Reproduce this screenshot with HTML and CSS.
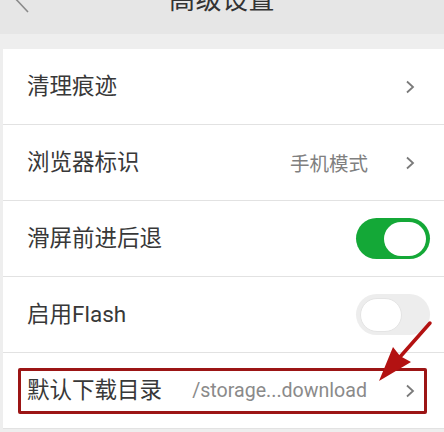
FILE: index.html
```html
<!DOCTYPE html>
<html lang="zh-CN">
<head>
<meta charset="utf-8">
<link rel="stylesheet" href="styles.css">
</head>
<body>
<div class="screen">
  <header class="topbar">
    <svg class="back" width="20" height="16" viewBox="0 0 20 16"><path d="M3 -4 L18 12" stroke="#8a8a8a" stroke-width="1.6" fill="none"/></svg>
    <div class="title">高级设置</div>
  </header>
  <div class="gap"></div>
  <ul class="list">
    <li class="row">
      <span class="label">清理痕迹</span>
      <span class="chev"><svg width="10" height="14" viewBox="0 0 10 14"><path d="M2 1.5 L8 7 L2 12.5" stroke="#7a7a7a" stroke-width="1.8" fill="none"/></svg></span>
    </li>
    <li class="row">
      <span class="label">浏览器标识</span>
      <span class="value">手机模式</span>
      <span class="chev"><svg width="10" height="14" viewBox="0 0 10 14"><path d="M2 1.5 L8 7 L2 12.5" stroke="#7a7a7a" stroke-width="1.8" fill="none"/></svg></span>
    </li>
    <li class="row">
      <span class="label">滑屏前进后退</span>
      <span class="toggle on"><span class="knob"></span></span>
    </li>
    <li class="row">
      <span class="label">启用Flash</span>
      <span class="toggle off"><span class="knob"></span></span>
    </li>
    <li class="row highlight">
      <span class="label">默认下载目录</span>
      <span class="value path">/storage...download</span>
      <span class="chev"><svg width="10" height="14" viewBox="0 0 10 14"><path d="M2 1.5 L8 7 L2 12.5" stroke="#7a7a7a" stroke-width="1.8" fill="none"/></svg></span>
      <span class="redbox"></span>
    </li>
  </ul>
  <svg class="arrow" width="444" height="432" viewBox="0 0 444 432">
    <line x1="430" y1="323" x2="392" y2="366" stroke="#b31212" stroke-width="3.5" stroke-linecap="round"/>
    <polygon points="379,381 393,347 400,356 411,362" fill="#b31212"/>
  </svg>
</div>
</body>
</html>
```
FILE: styles.css
```css
* { box-sizing: border-box; }
html, body { margin: 0; padding: 0; }
body {
  width: 444px;
  height: 432px;
  overflow: hidden;
  background: #efefef;
  font-family: "Roboto", "Noto Sans CJK SC", sans-serif;
}
.screen {
  position: relative;
  width: 444px;
  height: 432px;
  overflow: hidden;
  background: #eeeeee;
}
.topbar {
  height: 34px;
  background: #e6e6e6;
  display: flex;
  justify-content: center;
  align-items: flex-end;
  overflow: hidden;
  position: relative;
}
.back {
  position: absolute;
  left: 10px;
  top: 0;
}
.title {
  font-size: 26px;
  color: #333;
  line-height: 26px;
  margin-bottom: 21px;
  letter-spacing: 0.5px;
}
.gap {
  height: 15px;
}
.list {
  list-style: none;
  margin: 0 0 0 3px;
  padding: 0;
  background: #fff;
}
.row {
  position: relative;
  height: 76px;
  border-bottom: 1px solid #e2e2e2;
  display: flex;
  align-items: center;
  padding: 0 15px 0 24px;
}
.label {
  flex: 1;
  font-size: 22.5px;
  color: #383838;
  line-height: 1;
}
.value {
  font-size: 19.5px;
  color: #808080;
  margin-right: 37px;
}
.path {
  font-size: 19.6px;
  color: #8a8a8a;
  margin-right: 38px;
}
.chev {
  display: flex;
  width: 10px;
  margin-right: 14px;
}
.toggle {
  width: 74px;
  height: 41px;
  border-radius: 21px;
  display: flex;
  align-items: center;
  padding: 0 4px;
  margin-right: -1px;
}
.toggle.on {
  background: #14a837;
  justify-content: flex-end;
}
.toggle.off {
  background: #ededed;
  justify-content: flex-start;
}
.knob {
  width: 42px;
  height: 34px;
  border-radius: 17px;
  background: #fff;
}
.toggle.off .knob {
  border: 1px solid #e4e4e4;
}
.redbox {
  position: absolute;
  left: 15px;
  top: 15px;
  width: 409px;
  height: 46px;
  border: 3.5px solid #9c1515;
  border-radius: 2px;
  pointer-events: none;
}
.arrow {
  position: absolute;
  left: 0;
  top: 0;
  pointer-events: none;
}
```
